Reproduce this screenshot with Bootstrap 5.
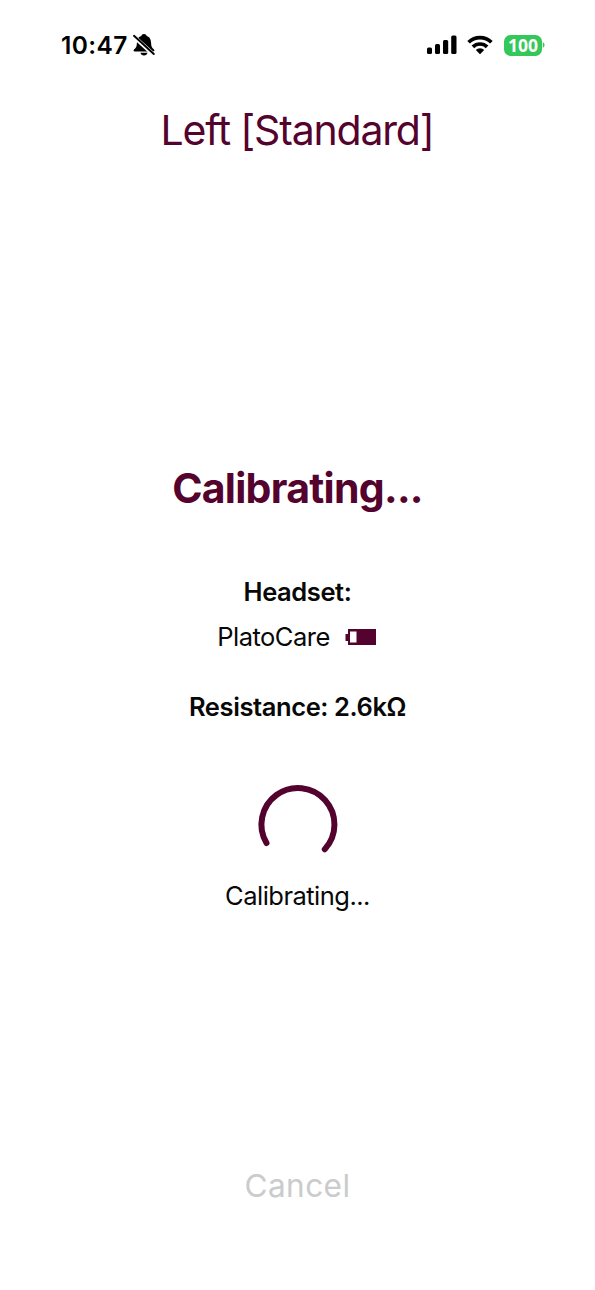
<!DOCTYPE html>
<html lang="en">
<head>
<meta charset="utf-8">
<meta name="viewport" content="width=device-width, initial-scale=1">
<title>Calibrating</title>
<link href="https://cdn.jsdelivr.net/npm/bootstrap@5.3.0/dist/css/bootstrap.min.css" rel="stylesheet">
<style>
  body { font-family: Inter, "Liberation Sans", sans-serif; color: #080808; background: #fff; }
  .screen { height: 1290px; overflow: hidden; }
  .status { height: 90px; padding: 0 50px 0 61px; color: #000; }
  .clock { font-size: 24.5px; font-weight: 600; line-height: 30px; letter-spacing: .4px; }
  .bell { margin-left: 4px; }
  .wifi { margin: 0 11px 0 10px; }
  .plum { color: #54032e; }
  .title { font-size: 41px; line-height: 50px; margin-top: 15px; letter-spacing: -1.2px; padding-right: 1px; }
  .heading { font-size: 41px; line-height: 50px; margin-top: 308px; font-weight: 700; letter-spacing: -.72px; }
  .line { font-size: 25.5px; line-height: 46px; letter-spacing: -.52px; }
  .label { font-weight: 600; letter-spacing: -.4px; }
  .first { margin: 55.5px 0 -.5px; }
  .device { padding-right: 1px; }
  .second { margin-top: 24px; }
  .cell { margin-left: 15px; }
  .spinner { margin: 52px 1px 7px 0; }
  .battery { width: 38px; height: 21px; border-radius: 6.5px; background: #34c759; color: #fff; font: 700 17.5px/21px "Open Sans", sans-serif; }
  .cancel { font: 400 31.6px/50px Inter, sans-serif; color: #cbcbcb; margin-top: 242px; letter-spacing: .4px; }
</style>
</head>
<body>
<main class="screen d-flex flex-column align-items-center text-nowrap">
  <header class="status w-100 d-flex align-items-center justify-content-between">
    <div class="d-flex align-items-center">
      <span class="clock">10:47</span>
      <svg class="bell" width="24" height="24" viewBox="0 0 24 24">
        <path d="M12 1c-1.500 0-2.400.8-2.700 2C6 4 5 7 4.900 10c-.1 3.500-.8 4.700-2.900 6.500-.8.8-.5 2 .7 2h18.600c1.200 0 1.500-1.200.7-2-2.100-1.800-2.800-3-2.900-6.500C19 7 18 4 14.700 3c-.3-1.200-1.200-2-2.700-2zM8.500 19.700a3.600 3.600 0 0 0 7 0z"/>
        <path d="M1.500 3.200L21.500 21.500" stroke="#fff" stroke-width="4.200"/>
        <path d="M2 2.800L21.800 21" stroke="#000" stroke-width="1.900" stroke-linecap="round"/>
      </svg>
    </div>
    <div class="d-flex align-items-center">
      <svg width="30" height="20" viewBox="0 0 30 20">
        <rect x="0" y="12.500" width="5" height="6.500" rx="1.500"/><rect x="8" y="9" width="5" height="10" rx="1.500"/><rect x="16" y="5" width="5.200" height="14" rx="1.500"/><rect x="24.200" y="0.500" width="5.300" height="18.500" rx="1.500"/>
      </svg>
      <svg class="wifi" width="26" height="20" viewBox="0 0 26 20">
        <g fill="none" stroke="#000" stroke-width="3.700"><path d="M1.600 7.300a16.300 16.300 0 0 1 22.800 0"/><path d="M5.900 11.900a10.200 10.200 0 0 1 14.200 0"/></g>
        <path d="M8.800 15.100a5.800 5.800 0 0 1 8.400 0L13 19.300z"/>
      </svg>
      <span class="battery d-flex align-items-center justify-content-center">100</span>
      <svg width="3" height="8" viewBox="0 0 3 8"><path d="M.8 1q3.600 3 0 6z" fill="#34c759"/></svg>
    </div>
  </header>
  <h1 class="title plum mb-0 fw-normal">Left [Standard]</h1>
  <h2 class="heading plum mb-0">Calibrating...</h2>
  <div class="line label first">Headset:</div>
  <div class="line device d-flex align-items-center">
    <span>PlatoCare</span>
    <svg class="cell" width="32" height="18" viewBox="0 0 32 18">
      <path fill="#54032e" fill-rule="evenodd" d="M3 1h28v16H3v-4H.500V6H3zM5 3.500v11h6.500v-11z"/>
    </svg>
  </div>
  <div class="line label second">Resistance: 2.6kΩ</div>
  <svg class="spinner" width="84" height="84" viewBox="0 0 84 84">
    <path d="M11.500 61A36.500 36.500 0 1 1 69.800 67.200" fill="none" stroke="#54032e" stroke-width="6" stroke-linecap="round"/>
  </svg>
  <div class="line">Calibrating...</div>
  <button type="button" class="cancel btn border-0 p-0">Cancel</button>
</main>
<script src="https://cdn.jsdelivr.net/npm/bootstrap@5.3.0/dist/js/bootstrap.bundle.min.js"></script>
</body>
</html>
